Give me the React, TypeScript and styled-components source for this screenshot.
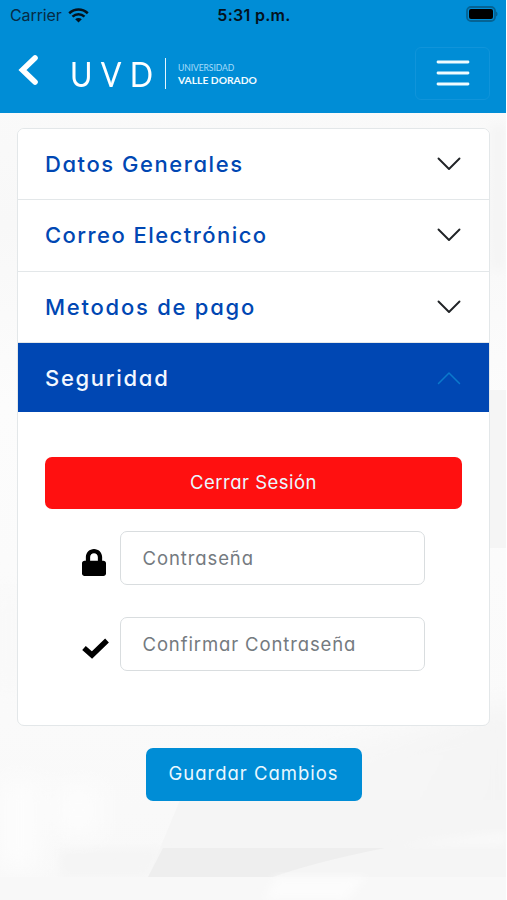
import React from "react";
import styled, { createGlobalStyle } from "styled-components";

const BLUE = "#008dd6";
const NAVY = "#0047b3";

const GlobalStyle = createGlobalStyle`
  *, *::before, *::after { box-sizing: border-box; }
  body {
    margin: 0;
    background: #fcfcfc;
    font-family: Inter, "Liberation Sans", sans-serif;
    font-feature-settings: "cv11", "ss03";
  }
  button, input { font: inherit; font-feature-settings: inherit; }
`;

const Page = styled.div`
  position: relative;
  isolation: isolate;
  width: 507px;
  height: 900px;
  overflow: hidden;
`;

const Backdrop = styled.svg`
  position: absolute;
  inset: 0;
  z-index: -1;
`;

const Header = styled.header`
  width: 506px;
  height: 112.5px;
  background: ${BLUE};
`;

const StatusBar = styled.div`
  display: grid;
  grid-template-columns: 1fr auto 1fr;
  align-items: center;
  height: 30px;
  padding: 0 8px 0 10px;
  color: #04121d;
`;

const Carrier = styled.div`
  display: flex;
  align-items: center;
  gap: 6px;
  font-size: 16px;
  letter-spacing: -0.1px;
  color: #062b45;
  font-feature-settings: normal;
`;

const Clock = styled.div`
  font-size: 16px;
  font-weight: 600;
  letter-spacing: 0.3px;
  font-feature-settings: normal;
`;

const BatteryIcon = styled.svg`
  justify-self: end;
  margin-top: -2px;
`;

const NavBar = styled.nav`
  display: flex;
  align-items: center;
  height: 82px;
  padding: 0 16px 0 18px;
`;

const BackButton = styled.button`
  display: flex;
  padding: 0;
  margin-top: -2px;
  border: 0;
  background: none;
`;

const Brand = styled.div`
  display: flex;
  align-items: center;
  height: 31px;
  margin: 5px auto 0 32px;
  color: #fff;
  font-family: Lato, sans-serif;
`;

const BrandMark = styled.span`
  width: 95px;
  font-size: 35px;
  line-height: 31px;
  letter-spacing: 9.6px;
  white-space: nowrap;
  transform: scaleX(0.87);
  transform-origin: left;
`;

const BrandName = styled.span`
  display: flex;
  flex-direction: column;
  justify-content: center;
  height: 31px;
  padding-left: 12px;
  border-left: 1px solid #e4f6ff;
`;

const BrandLine = styled.span<{ $strong?: boolean }>`
  font-size: ${(p) => (p.$strong ? "10.3px" : "8.6px")};
  font-weight: ${(p) => (p.$strong ? 700 : 400)};
  line-height: 12px;
  letter-spacing: ${(p) => (p.$strong ? "0px" : "-0.1px")};
  color: ${(p) => (p.$strong ? "#f2fbff" : "#a5dcfa")};
  white-space: nowrap;
`;

const MenuButton = styled.button`
  display: grid;
  place-items: center;
  width: 75px;
  height: 53px;
  margin-top: 4px;
  padding: 0;
  border: 1px solid #1094da;
  border-radius: 6px;
  background: none;
`;

const Content = styled.main`
  display: flex;
  flex-direction: column;
  align-items: center;
  padding: 15px 17px 0;
`;

const Accordion = styled.div`
  width: 473px;
  height: 598.5px;
  overflow: hidden;
  border: 1.5px solid #e3e7e9;
  border-radius: 7px;
  background: #fff;
`;

const AccordionHeader = styled.button<{ $open?: boolean }>`
  display: flex;
  align-items: center;
  justify-content: space-between;
  width: 100%;
  height: ${(p) => (p.$open ? "69px" : "71.5px")};
  padding: 0 28.5px 0 27px;
  border: 0;
  border-bottom: ${(p) => (p.$open ? "0" : "1.5px solid #e3e7e9")};
  background: ${(p) => (p.$open ? NAVY : "#fff")};
  color: ${(p) => (p.$open ? "#f3f8ff" : NAVY)};
  font-size: 22px;
  font-weight: 500;
`;

const Label = styled.span<{ $track: number }>`
  letter-spacing: ${(p) => p.$track}px;
  white-space: nowrap;
`;

const Panel = styled.div`
  display: flex;
  flex-direction: column;
  padding: 44.5px 27px 0;
`;

const ActionButton = styled.button<{ $tone: string; $width: string }>`
  width: ${(p) => p.$width};
  height: 52.5px;
  padding: 0 0 2px;
  border: 0;
  border-radius: 7px;
  background: ${(p) => p.$tone};
  color: #eaf8ff;
  font-size: 18.5px;
`;

const Field = styled.label`
  display: flex;
  align-items: center;
  height: 54px;
  margin: 22px 37px 10px 37px;
`;

const FieldIcon = styled.span`
  display: flex;
  width: 38px;
  padding-top: 8px;
`;

const Input = styled.input<{ $track: number }>`
  flex: 1;
  min-width: 0;
  height: 54px;
  padding: 0 21.5px;
  border: 1.5px solid #d9dddf;
  border-radius: 7px;
  background: #fff;
  font-size: 18.5px;
  letter-spacing: ${(p) => p.$track}px;
  &::placeholder {
    color: #747a80;
    opacity: 1;
  }
`;

const SaveRow = styled.div`
  display: flex;
  justify-content: center;
  padding-top: 22px;
`;

const Chevron = ({ open }: { open?: boolean }) => (
  <svg width="24" height="16" viewBox="0 0 24 16" fill="none">
    <path
      d={open ? "M1.5 13.500 12 3 22.500 13.500" : "M1.500 2.500 12 13 22.500 2.500"}
      stroke={open ? "#0b79cc" : "#202326"}
      strokeWidth={open ? 1.5 : 1.9}
      strokeLinecap="round"
      strokeLinejoin="round"
    />
  </svg>
);

const sections = [
  { title: "Datos Generales", track: 1.55 },
  { title: "Correo Electrónico", track: 1.45 },
  { title: "Metodos de pago", track: 1.75 },
];

export default function App() {
  return (
    <>
      <GlobalStyle />
      <Page>
        <Backdrop width="507" height="900" viewBox="0 0 507 900">
          <defs>
            <linearGradient id="base" x1="0" y1="0" x2="0" y2="1">
              <stop offset="0" stopColor="#fbfbfb" />
              <stop offset="0.25" stopColor="#f8f8f8" />
              <stop offset="0.45" stopColor="#fcfcfc" />
              <stop offset="0.8" stopColor="#fafafa" />
              <stop offset="1" stopColor="#f8f8f8" />
            </linearGradient>
            <linearGradient id="shade" x1="0" y1="0" x2="1" y2="0.3">
              <stop offset="0" stopColor="#fafafa" />
              <stop offset="1" stopColor="#f4f4f4" />
            </linearGradient>
            <filter id="soft" x="-50%" y="-50%" width="200%" height="200%">
              <feGaussianBlur stdDeviation="12" />
            </filter>
            <filter id="feather" x="-20%" y="-20%" width="140%" height="140%">
              <feGaussianBlur stdDeviation="4" />
            </filter>
          </defs>
          <rect width="507" height="900" fill="url(#base)" />
          <path d="M490 125h16v145h-16z" fill="#f5f5f5" filter="url(#feather)" />
          <path d="M490 390h16v158h-16z" fill="#f5f5f5" />
          <path d="M0 590h18v100H0z" fill="#f8f8f8" filter="url(#soft)" />
          <path d="M300 760 520 700v190H180z" fill="url(#shade)" filter="url(#soft)" />
          <path d="M180 800h326v77H148z" fill="#f5f5f5" />
          <path d="M60 848h103l-15 29H60z" fill="#f5f5f5" filter="url(#feather)" />
          <path d="M163 848h222q-70 14-112 29H148z" fill="#eeeeee" />
          <path d="M395 846 506 832v13z" fill="#f9f9f9" filter="url(#feather)" />
          <path d="M0 780h40v90H0zM56 785h45v50H56z" fill="#fdfdfd" filter="url(#soft)" />
          <path d="M0 877h506v23H0z" fill="#f8f8f8" />
          <path d="M276 877h90l-20 23h-82z" fill="#fcfcfc" filter="url(#feather)" />
          <path d="M506 0h1v900h-1z" fill="#fff" />
        </Backdrop>

        <Header>
          <StatusBar>
            <Carrier>
              <span>Carrier</span>
              <svg width="21" height="15" viewBox="0 0 21 15" fill="none" stroke="#04121d" strokeWidth="2.6">
                <path d="M1.2 5.2C6.7.3 14.3.3 19.8 5.2" />
                <path d="M4.5 8.6c3.500-3.100 8.500-3.100 12 0" />
                <path d="M10.500 14.400 7.200 11.300c1.900-1.800 4.700-1.800 6.600 0z" fill="#04121d" stroke="none" />
              </svg>
            </Carrier>
            <Clock>5:31 p.m.</Clock>
            <BatteryIcon width="32" height="16" viewBox="0 0 32 16">
              <rect x="1" y="1" width="28" height="14" rx="4" fill="none" stroke="#056394" strokeWidth="1.8" />
              <rect x="3" y="3" width="24" height="10" rx="2" fill="#000" />
              <path d="M30 5.5c2 .8 2 4.200 0 5z" fill="#056394" />
            </BatteryIcon>
          </StatusBar>
          <NavBar>
            <BackButton aria-label="Volver">
              <svg width="20" height="32" viewBox="0 0 20 32" fill="none">
                <path d="M17 4 4.500 16 17 28" stroke="#fff" strokeWidth="5.6" strokeLinejoin="miter" strokeLinecap="round" />
              </svg>
            </BackButton>
            <Brand>
              <BrandMark>UVD</BrandMark>
              <BrandName>
                <BrandLine>UNIVERSIDAD</BrandLine>
                <BrandLine $strong>VALLE DORADO</BrandLine>
              </BrandName>
            </Brand>
            <MenuButton aria-label="Menú">
              <svg width="34" height="26" viewBox="0 0 34 26" stroke="#f0fcff" strokeWidth="2.800" strokeLinecap="round">
                <path d="M2 2h30M2 13h30M2 24h30" />
              </svg>
            </MenuButton>
          </NavBar>
        </Header>

        <Content>
          <Accordion>
            {sections.map((s) => (
              <AccordionHeader key={s.title}>
                <Label $track={s.track}>{s.title}</Label>
                <Chevron />
              </AccordionHeader>
            ))}
            <AccordionHeader $open>
              <Label $track={1.7}>Seguridad</Label>
              <Chevron open />
            </AccordionHeader>
            <Panel>
              <ActionButton $tone="#ff1010" $width="100%">
                <Label $track={0.5}>Cerrar Sesión</Label>
              </ActionButton>
              <Field>
                <FieldIcon>
                  <svg width="24" height="27" viewBox="0 0 448 512" preserveAspectRatio="none">
                    <path d="M400 224h-24v-72C376 68.200 307.800 0 224 0S72 68.200 72 152v72H48c-26.500 0-48 21.500-48 48v192c0 26.500 21.500 48 48 48h352c26.500 0 48-21.500 48-48V272c0-26.500-21.500-48-48-48zm-104 0H152v-72c0-39.700 32.300-72 72-72s72 32.300 72 72v72z" />
                  </svg>
                </FieldIcon>
                <Input $track={0.9} placeholder="Contraseña" />
              </Field>
              <Field>
                <FieldIcon>
                  <svg width="27" height="21" viewBox="0 0 27 21" fill="none">
                    <path d="M2 10 10 17 25 2.500" stroke="#000" strokeWidth="5.400" strokeLinejoin="miter" />
                  </svg>
                </FieldIcon>
                <Input $track={0.88} placeholder="Confirmar Contraseña" />
              </Field>
            </Panel>
          </Accordion>
          <SaveRow>
            <ActionButton $tone={BLUE} $width="216px">
              <Label $track={0.98}>Guardar Cambios</Label>
            </ActionButton>
          </SaveRow>
        </Content>
      </Page>
    </>
  );
}
